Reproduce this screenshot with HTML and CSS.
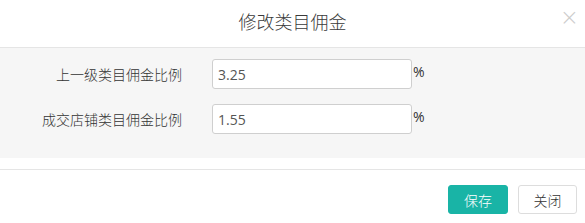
FILE: index.html
```html
<!DOCTYPE html>
<html lang="zh-CN">
<head>
    <meta charset="UTF-8">
    <title>修改类目佣金</title>
    <link rel="stylesheet" href="styles.css">
</head>
<body>
    <div class="modal">
        <div class="modal-header">
            <h4 class="modal-title">修改类目佣金</h4>
            <span class="close">&times;</span>
        </div>

        <div class="modal-body">
            <form class="form">
                <div class="form-row">
                    <label class="form-label">上一级类目佣金比例</label>
                    <input class="form-input" type="text" value="3.25">
                    <span class="unit">%</span>
                </div>
                <div class="form-row">
                    <label class="form-label">成交店铺类目佣金比例</label>
                    <input class="form-input" type="text" value="1.55">
                    <span class="unit">%</span>
                </div>
            </form>
        </div>

        <div class="modal-footer">
            <button class="btn btn-primary">保存</button>
            <button class="btn btn-default">关闭</button>
        </div>
    </div>
</body>
</html>
```

FILE: styles.css
```css
* {
    margin: 0;
    padding: 0;
    box-sizing: border-box;
}

body {
    font-family: "Open Sans", "Noto Sans CJK SC", sans-serif;
    background: #ffffff;
    color: #333333;
    font-size: 14px;
}

.modal {
    width: 585px;
    height: 223px;
    background: #ffffff;
}

.modal-header {
    height: 48px;
    border-bottom: 1px solid #e5e5e5;
    display: flex;
    align-items: center;
    justify-content: center;
    position: relative;
}

.modal-title {
    font-size: 18px;
    font-weight: 300;
    color: #3a3a3a;
    margin-top: -6px;
}

.close {
    position: absolute;
    right: 6px;
    top: 4px;
    font-size: 23px;
    color: #cccccc;
    font-family: "DejaVu Sans", sans-serif;
    font-weight: 300;
}

.modal-body {
    padding-bottom: 11px;
}

.form {
    background: #f6f6f6;
    height: 110px;
    padding-top: 11px;
}

.form-row {
    display: flex;
    align-items: center;
    height: 30px;
    margin-bottom: 15px;
}

.form-label {
    width: 182px;
    text-align: right;
    font-size: 14px;
    font-weight: 300;
    color: #333333;
    margin-right: 30px;
}

.form-input {
    width: 200px;
    height: 30px;
    border: 1px solid #cfcfcf;
    border-radius: 3px;
    background: #ffffff;
    padding: 0 5px;
    font-family: "Open Sans", sans-serif;
    font-size: 14px;
    color: #555555;
    outline: none;
}

.unit {
    font-size: 14px;
    color: #333333;
    margin-left: 1px;
    margin-top: -5px;
}

.modal-footer {
    border-top: 1px solid #e5e5e5;
    display: flex;
    justify-content: flex-end;
    gap: 10px;
    padding: 15px 8px 0 0;
}

.btn {
    height: 29px;
    padding: 0;
    border-radius: 3px;
    font-family: "Noto Sans CJK SC", sans-serif;
    font-size: 14px;
    font-weight: 300;
    cursor: pointer;
}

.btn-primary {
    width: 60px;
    background: #19b4a6;
    border: 1px solid #19b4a6;
    color: #ffffff;
}

.btn-default {
    width: 59px;
    background: #ffffff;
    border: 1px solid #dddddd;
    color: #333333;
}
```
